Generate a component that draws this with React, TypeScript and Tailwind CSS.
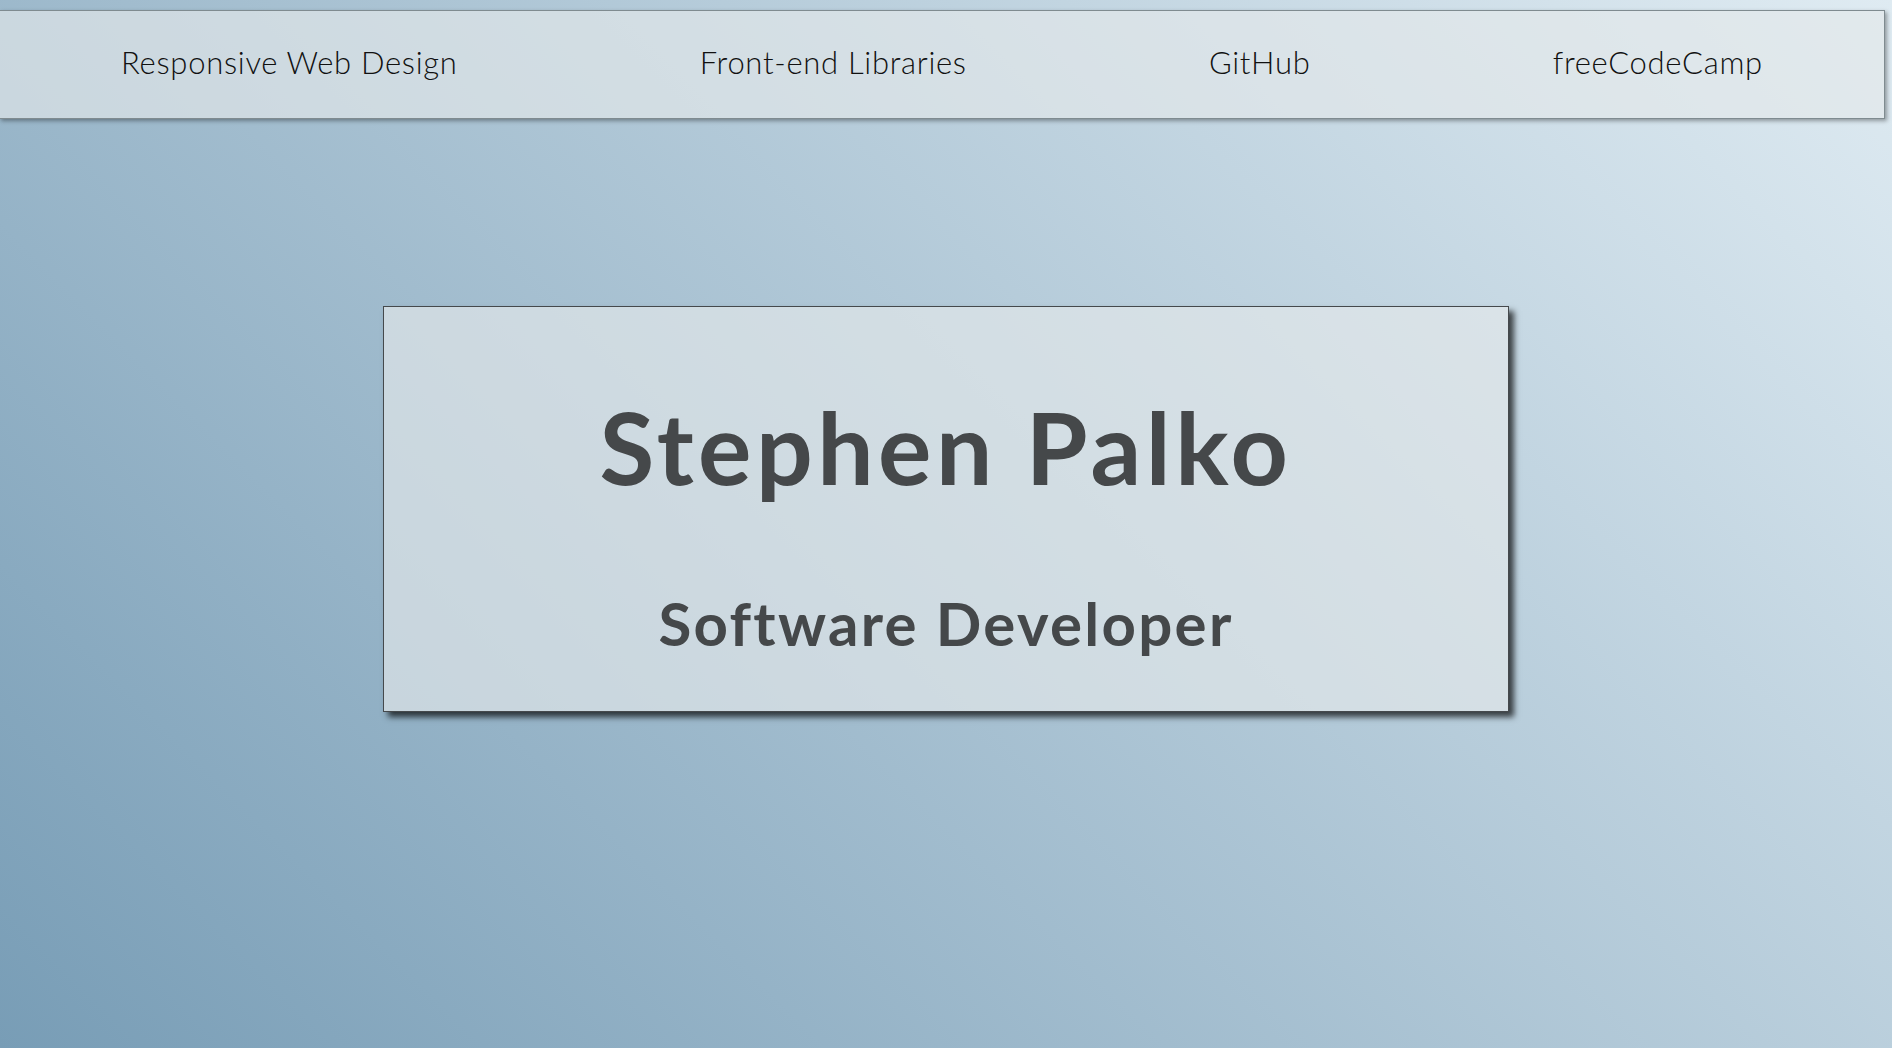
export default function App() {
  const links = ["Responsive Web Design", "Front-end Libraries", "GitHub", "freeCodeCamp"];
  return (
    <div
      className="w-full h-[1048px] overflow-hidden bg-[linear-gradient(45deg,#789db6,#dfebf2)] pt-[10px]"
      style={{ fontFamily: "Lato, 'Open Sans', sans-serif" }}
    >
      <nav className="-ml-px w-[1886px] h-[109px] border border-[#7f8b90] bg-[rgba(228,232,234,0.66)] shadow-[2px_2px_4px_rgba(0,0,0,0.35)] flex items-center justify-around">
        {links.map((l) => (
          <a key={l} href="#" className="pb-[5px] text-[31px] font-light text-[#111] leading-none tracking-[0.7px]">
            {l}
          </a>
        ))}
      </nav>
      <div className="mx-auto mt-[187px] w-[1126px] h-[406px] border border-[#45494c] bg-[rgba(228,232,234,0.66)] shadow-[5px_5px_6px_rgba(0,0,0,0.7)] flex flex-col items-center pt-[89px]">
        <h1 className="text-[100px] leading-[100px] font-bold text-[#45484a] tracking-[4.5px]">Stephen Palko</h1>
        <h2 className="mt-[97px] text-[60px] leading-[60px] font-bold text-[#45484a] tracking-[2.3px]">Software Developer</h2>
      </div>
    </div>
  );
}
